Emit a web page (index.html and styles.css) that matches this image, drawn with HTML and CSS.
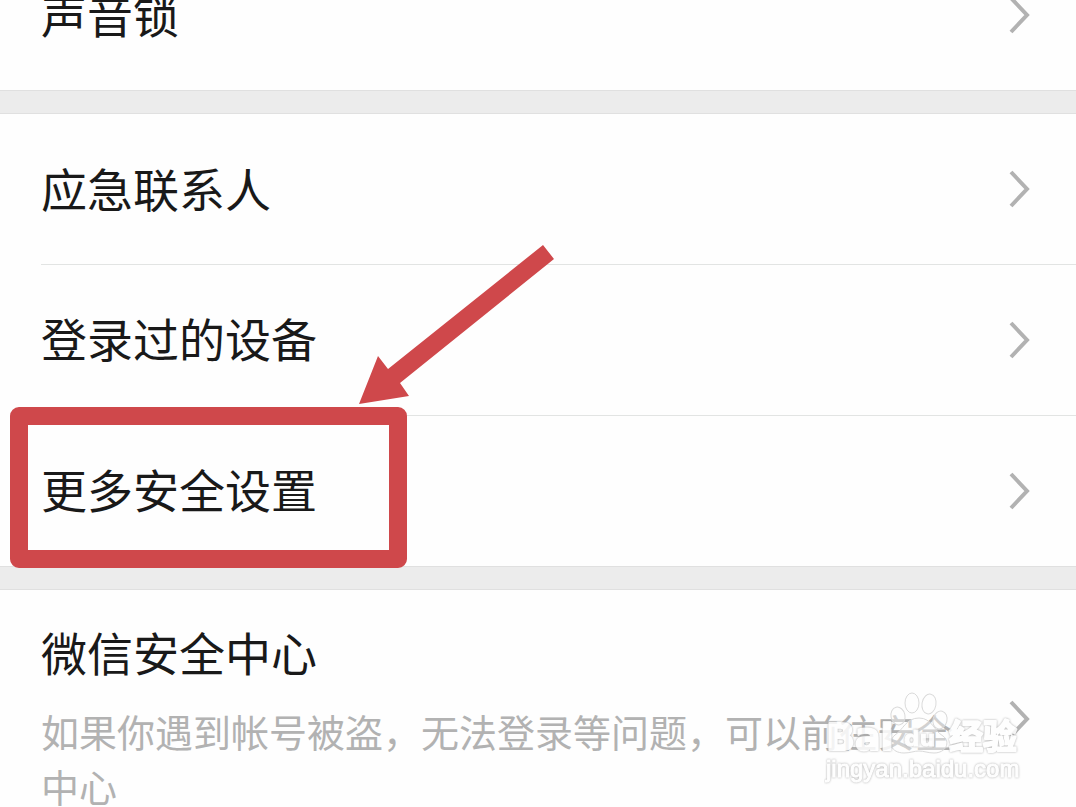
FILE: index.html
```
<!DOCTYPE html>
<html lang="zh-CN">
<head>
  <meta charset="UTF-8">
  <meta name="viewport" content="width=device-width, initial-scale=1">
  <title>更多安全设置</title>
  <link rel="stylesheet" href="styles.css">
</head>
<body>
  <main class="screen">
    <nav class="settings">
      <div class="group">
        <a class="row" href="#voice">
          <span class="title">声音锁</span>
          <svg class="chevron" viewBox="0 0 22 38" aria-hidden="true"><path d="M3 2 L19 19 L3 36"/></svg>
        </a>
      </div>

      <div class="group">
        <a class="row" href="#contacts">
          <span class="title">应急联系人</span>
          <svg class="chevron" viewBox="0 0 22 38" aria-hidden="true"><path d="M3 2 L19 19 L3 36"/></svg>
        </a>
        <a class="row" href="#devices">
          <span class="title">登录过的设备</span>
          <svg class="chevron" viewBox="0 0 22 38" aria-hidden="true"><path d="M3 2 L19 19 L3 36"/></svg>
        </a>
        <a class="row" href="#more">
          <span class="title">更多安全设置</span>
          <svg class="chevron" viewBox="0 0 22 38" aria-hidden="true"><path d="M3 2 L19 19 L3 36"/></svg>
          <span class="highlight"></span>
          <svg class="arrow" viewBox="0 0 196 160" aria-hidden="true">
            <path d="M0 160 L19 112 L29 125 L184 1 L195 15 L41 139 L50 152 Z"/>
          </svg>
        </a>
      </div>

      <div class="group">
        <a class="row row-tall" href="#center">
          <span class="text">
            <span class="title">微信安全中心</span>
            <span class="desc">如果你遇到帐号被盗，无法登录等问题，可以前往安全中心</span>
          </span>
          <svg class="chevron" viewBox="0 0 22 38" aria-hidden="true"><path d="M3 2 L19 19 L3 36"/></svg>
        </a>
      </div>
    </nav>

    <svg class="watermark" viewBox="0 0 200 100" aria-label="Baidu经验">
      <g class="paw">
        <path d="M95 27 C108 27 110 40 119 45 C127 51 122 62 110 62 C104 62 100 60 95 60 C90 60 86 62 80 62 C67 62 63 51 71 44 C79 39 82 27 95 27 Z"/>
        <ellipse cx="74" cy="25" rx="7" ry="9" transform="rotate(-12 74 25)"/>
        <ellipse cx="88" cy="12" rx="7" ry="10"/>
        <ellipse cx="105" cy="13" rx="7" ry="10" transform="rotate(10 105 13)"/>
        <ellipse cx="116" cy="29" rx="7" ry="9" transform="rotate(14 116 29)"/>
      </g>
      <g class="mark">
        <text class="brand" x="2" y="59">Bai</text>
        <text class="du" x="80" y="55">du</text>
        <text class="cn" x="125" y="58">经验</text>
        <text class="site" x="2" y="86">jingyan.baidu.com</text>
      </g>
    </svg>
  </main>
</body>
</html>
```
FILE: styles.css
```
* {
  box-sizing: border-box;
}

body {
  margin: 0;
  background: #ffffff;
  color: #191919;
  font-family: "Noto Sans CJK SC", sans-serif;
}

.screen {
  position: relative;
  height: 100vh;
  overflow: hidden;
}

/* list is scrolled, first row is partly off screen */
.settings {
  margin-top: -60px;
  background: #ececec;
}

.group {
  background: #fefefe;
}

.group + .group {
  margin-top: 22px;
  border-top: 1px solid #e0e0e0;
}

.group:not(:last-child) {
  border-bottom: 1px solid #e0e0e0;
}

.row {
  position: relative;
  display: flex;
  align-items: center;
  justify-content: space-between;
  height: 150px;
  padding: 0 46px 0 41px;
  color: inherit;
  text-decoration: none;
}

.row + .row {
  height: 151px;
}

.row + .row::before {
  content: "";
  position: absolute;
  top: 0;
  left: 41px;
  right: 0;
  height: 1px;
  background: #e2e4e3;
}

.row-tall {
  height: auto;
  padding-top: 34px;
  padding-bottom: 32px;
}

.text {
  flex: 1;
  padding-right: 36px;
}

.title {
  display: block;
  padding-bottom: 5px;
  font-size: 46px;
  line-height: 54px;
}

.desc {
  display: block;
  margin-top: 20px;
  color: #b2b2b2;
  font-size: 38px;
  line-height: 55px;
}

.chevron {
  flex: none;
  width: 22px;
  height: 38px;
  fill: none;
  stroke: #b2b2b2;
  stroke-width: 4;
}

.highlight {
  position: absolute;
  z-index: 1;
  top: -8px;
  left: 10px;
  width: 397px;
  height: 161px;
  border: 18px solid #cf484b;
  border-radius: 9px;
}

.arrow {
  position: absolute;
  z-index: 1;
  top: -171px;
  left: 359px;
  width: 196px;
  height: 160px;
  fill: #cf484b;
}

.watermark {
  position: absolute;
  right: 52px;
  bottom: 16px;
  width: 200px;
  height: 100px;
}

.paw {
  fill: #ffffff;
  fill-opacity: 0.4;
  stroke: #dadada;
  stroke-width: 1;
}

/* white letters with a thin grey edge */
.mark {
  fill: #ffffff;
  stroke: #ffffff;
  stroke-width: 1;
  stroke-linejoin: round;
  opacity: 0.85;
  filter: drop-shadow(0 0 1px #a0a0a0);
}

.brand,
.du {
  font-family: "DejaVu Sans", sans-serif;
  font-weight: bold;
}

.brand {
  font-size: 38px;
  stroke-width: 2;
}

.du {
  font-size: 22px;
}

.cn {
  font-family: "Noto Sans CJK SC", sans-serif;
  font-size: 34px;
  font-weight: bold;
  stroke-width: 2;
}

.site {
  font-family: "Liberation Sans", sans-serif;
  font-size: 24px;
}
```
